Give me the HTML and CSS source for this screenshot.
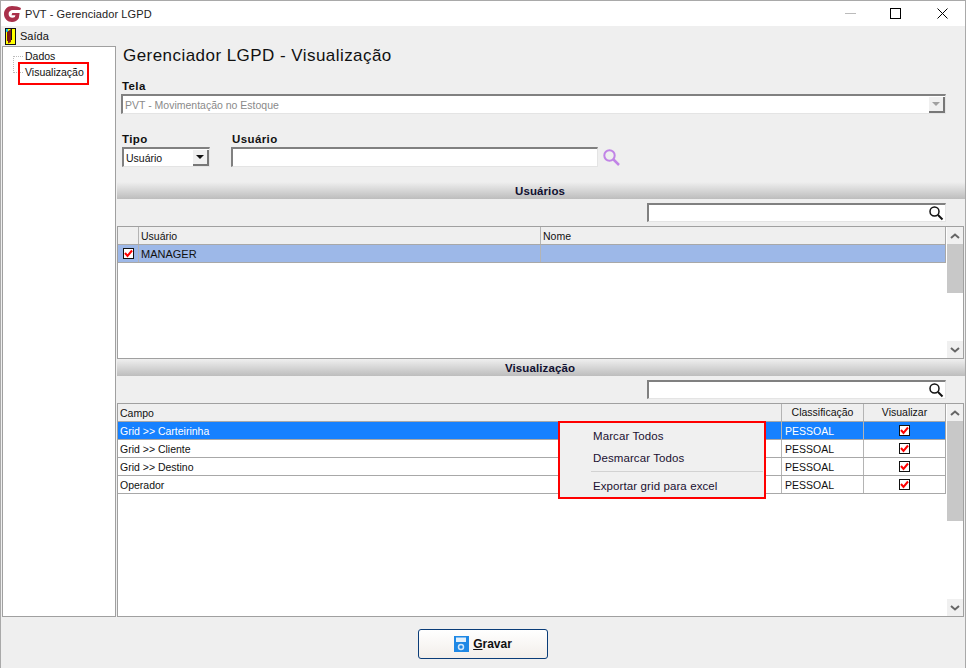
FILE: index.html
```html
<!DOCTYPE html>
<html lang="pt-BR">
<head>
<meta charset="utf-8">
<title>PVT - Gerenciador LGPD</title>
<link rel="stylesheet" href="styles.css">
</head>
<body>
<div class="window">
  <header class="titlebar">
    <svg class="logo" width="17" height="16" viewBox="0 0 17 16"><path d="M8 0C3.500 0 0 3.400 0 8s3.500 8 8 8c3 0 5.500-1.400 6.800-3.800L15.600 7H8.300L7.500 9.300h3.900l-.5 1.700c-.7.500-1.600.7-2.500.7-2.200 0-3.800-1.500-3.800-3.700s1.800-3.900 4-3.900h7.800L17 2C15 .700 11.500 0 8 0z" fill="#a9304a"/></svg>
    <span class="title-text">PVT - Gerenciador LGPD</span>
    <div class="win-controls">
      <svg width="11" height="11" viewBox="0 0 11 11"><path d="M0 5.500h11" stroke="#bbb" fill="none"/></svg>
      <svg width="11" height="11" viewBox="0 0 11 11"><rect x=".5" y=".5" width="10" height="10" fill="none" stroke="#000"/></svg>
      <svg class="win-close" width="11" height="11" viewBox="0 0 11 11"><path d="M.5.500l10 10M10.500.500l-10 10" fill="none" stroke="#000"/></svg>
    </div>
  </header>
  <nav class="menubar">
    <svg width="11" height="17" viewBox="0 0 11 17"><rect width="11" height="17" fill="#111"/><rect x="1" y="1" width="9" height="15" fill="#ff0"/><rect x="1" y="1" width="2" height="3" fill="#18c8e8"/><path d="M2 4l4-3v13l-4 2z" fill="#7a1a1a"/><rect x="1" y="13" width="2" height="3" fill="#ff0"/><rect x="6" y="1" width="1" height="11" fill="#111"/></svg>
    <span>Saída</span>
  </nav>
  <div class="content">
    <aside class="tree">
      <div class="tree-line"></div>
      <div class="node">Dados</div>
      <div class="node node-marked">Visualização</div>
    </aside>
    <main class="main">
      <div class="form">
        <h1 class="heading">Gerenciador LGPD - Visualização</h1>
        <label class="label">Tela</label>
        <div class="field field-tela">
          <span class="value muted">PVT - Movimentação no Estoque</span>
          <span class="drop drop-off"><i></i></span>
        </div>
        <div class="filters">
          <div class="col-tipo">
            <label class="label">Tipo</label>
            <div class="field field-tipo"><span class="value">Usuário</span><span class="drop"><i></i></span></div>
          </div>
          <div class="col-user">
            <label class="label">Usuário</label>
            <div class="user-row">
              <div class="field field-user"></div>
              <svg width="17" height="17" viewBox="0 0 17 17"><circle cx="6.500" cy="6.500" r="5.200" fill="none" stroke="#c184e6" stroke-width="2"/><path d="M10.500 10.500l5.500 5.500" stroke="#c184e6" stroke-width="2.500"/></svg>
            </div>
          </div>
        </div>
      </div>

      <div class="band">Usuários</div>
      <div class="searchbar">
        <div class="field field-search">
          <svg width="16" height="16" viewBox="0 0 16 16"><circle cx="6.500" cy="6.500" r="4.500" fill="none" stroke="#111" stroke-width="1.500"/><path d="M10 10l4.500 4.500" stroke="#111" stroke-width="2"/></svg>
        </div>
      </div>
      <section class="grid grid-users">
        <div class="grid-body">
          <div class="row head cols-users">
            <div class="cell"></div><div class="cell">Usuário</div><div class="cell">Nome</div>
          </div>
          <div class="row sel-light cols-users">
            <div class="cell cell-center"><span class="check"><svg width="9" height="9" viewBox="0 0 9 9"><path d="M1 4l2.500 3L8 1.500" fill="none" stroke="#f00" stroke-width="2"/></svg></span></div>
            <div class="cell cell-manager">MANAGER</div><div class="cell"></div>
          </div>
        </div>
        <div class="scroll">
          <span class="arrow"><svg width="10" height="6" viewBox="0 0 10 6"><path d="M1 5l4-3.500L9 5" fill="none" stroke="#666" stroke-width="2"/></svg></span>
          <div class="thumb thumb-users"></div>
          <span class="arrow"><svg width="10" height="6" viewBox="0 0 10 6"><path d="M1 1l4 3.500L9 1" fill="none" stroke="#666" stroke-width="2"/></svg></span>
        </div>
      </section>

      <div class="band">Visualização</div>
      <div class="searchbar">
        <div class="field field-search">
          <svg width="16" height="16" viewBox="0 0 16 16"><circle cx="6.500" cy="6.500" r="4.500" fill="none" stroke="#111" stroke-width="1.500"/><path d="M10 10l4.500 4.500" stroke="#111" stroke-width="2"/></svg>
        </div>
      </div>
      <section class="grid grid-fields">
        <div class="grid-body">
          <div class="row head cols-fields">
            <div class="cell">Campo</div><div class="cell cell-center">Classificação</div><div class="cell cell-center">Visualizar</div>
          </div>
          <div class="row sel cols-fields">
            <div class="cell">Grid &gt;&gt; Carteirinha</div><div class="cell cell-cls">PESSOAL</div>
            <div class="cell cell-center"><span class="check"><svg width="9" height="9" viewBox="0 0 9 9"><path d="M1 4l2.500 3L8 1.500" fill="none" stroke="#f00" stroke-width="2"/></svg></span></div>
          </div>
          <div class="row cols-fields">
            <div class="cell">Grid &gt;&gt; Cliente</div><div class="cell cell-cls">PESSOAL</div>
            <div class="cell cell-center"><span class="check"><svg width="9" height="9" viewBox="0 0 9 9"><path d="M1 4l2.500 3L8 1.500" fill="none" stroke="#f00" stroke-width="2"/></svg></span></div>
          </div>
          <div class="row cols-fields">
            <div class="cell">Grid &gt;&gt; Destino</div><div class="cell cell-cls">PESSOAL</div>
            <div class="cell cell-center"><span class="check"><svg width="9" height="9" viewBox="0 0 9 9"><path d="M1 4l2.500 3L8 1.500" fill="none" stroke="#f00" stroke-width="2"/></svg></span></div>
          </div>
          <div class="row cols-fields">
            <div class="cell">Operador</div><div class="cell cell-cls">PESSOAL</div>
            <div class="cell cell-center"><span class="check"><svg width="9" height="9" viewBox="0 0 9 9"><path d="M1 4l2.500 3L8 1.500" fill="none" stroke="#f00" stroke-width="2"/></svg></span></div>
          </div>
        </div>
        <div class="scroll">
          <span class="arrow"><svg width="10" height="6" viewBox="0 0 10 6"><path d="M1 5l4-3.500L9 5" fill="none" stroke="#666" stroke-width="2"/></svg></span>
          <div class="thumb thumb-fields"></div>
          <span class="arrow"><svg width="10" height="6" viewBox="0 0 10 6"><path d="M1 1l4 3.500L9 1" fill="none" stroke="#666" stroke-width="2"/></svg></span>
        </div>
        <div class="context">
          <div class="ctx-item">Marcar Todos</div>
          <div class="ctx-item">Desmarcar Todos</div>
          <div class="ctx-sep"></div>
          <div class="ctx-item">Exportar grid para excel</div>
        </div>
      </section>
    </main>
  </div>
  <footer class="footer">
    <button class="save" type="button">
      <svg width="15" height="16" viewBox="0 0 15 16"><rect width="15" height="16" fill="#1e88e5"/><rect x="2" y="1.500" width="10" height="4.500" fill="#e3f0fb"/><circle cx="7" cy="11" r="2.500" fill="none" stroke="#cfe6fa" stroke-width="1.500"/></svg>
      <span><u>G</u>ravar</span>
    </button>
  </footer>
</div>
</body>
</html>
```
FILE: styles.css
```css
*, *::after { box-sizing: border-box; }
html, body { margin: 0; padding: 0; }
body {
  width: 966px;
  height: 668px;
  overflow: hidden;
  font-family: "Liberation Sans", Arial, sans-serif;
  font-size: 10.5px;
  color: #111;
  background: #efefef;
}
.window {
  width: 966px;
  height: 668px;
  display: flex;
  flex-direction: column;
  border-top: 1px solid #a9a9a9;
  border-left: 1px solid #a9a9a9;
  border-right: 1px solid #a9a9a9;
}
.titlebar {
  height: 25px;
  flex: none;
  background: #fff;
  display: flex;
  align-items: center;
  padding-left: 3px;
  gap: 4px;
}
.title-text { font-size: 11px; color: #222; flex: 1; letter-spacing: .1px; }
.win-controls { display: flex; gap: 34px; padding-right: 17px; align-items: center; }
.win-close { margin-left: 2px; }
.menubar {
  height: 20px;
  flex: none;
  display: flex;
  align-items: center;
  gap: 4px;
  padding-left: 4px;
  font-size: 11px;
}
.content { flex: none; height: 571px; display: flex; }
.tree {
  position: relative;
  width: 114px;
  margin: 0 1px 0 1px;
  flex: none;
  background: #fff;
  border: 1px solid #a0a0a0;
  padding: 1px 0 0 21px;
}
.tree-line {
  position: absolute;
  left: 10px;
  top: 9px;
  width: 10px;
  height: 17px;
  border-left: 1px dotted #bbb;
  border-top: 1px dotted #bbb;
  border-bottom: 1px dotted #bbb;
}
.node { height: 16px; line-height: 16px; padding-left: 1px; white-space: nowrap; }
.node-marked { position: relative; }
.node-marked::after {
  content: "";
  position: absolute;
  left: -6px;
  top: -2px;
  width: 71px;
  height: 23px;
  border: 2px solid #f00;
}
.main { flex: 1; min-width: 0; display: flex; flex-direction: column; }
.form { height: 136px; flex: none; padding: 0 0 0 4px; }
.heading {
  margin: 0;
  font-size: 17px;
  font-weight: 400;
  letter-spacing: .45px;
  color: #111;
  line-height: 20px;
  padding: 0 0 0 2px;
  height: 33px;
}
.label {
  display: block;
  font-size: 11.5px;
  font-weight: 700;
  line-height: 14px;
  height: 15px;
  padding-left: 1px;
  letter-spacing: .4px;
}
.field {
  background: #fff;
  border-top: 2px solid #808080;
  border-left: 2px solid #808080;
  border-right: 1px solid #e4e4e4;
  border-bottom: 1px solid #e4e4e4;
  display: flex;
  align-items: center;
}
.value { flex: 1; padding: 1px 0 0 2px; white-space: nowrap; overflow: hidden; }
.muted { color: #8a8a8a; }
.field-tela { width: 825px; height: 20px; }
.drop {
  width: 16px;
  height: 16px;
  background: #f0f0f0;
  border-right: 2px solid #777;
  border-bottom: 2px solid #777;
  display: flex;
  align-items: center;
  justify-content: center;
  flex: none;
}
.drop i {
  width: 0;
  height: 0;
  border-left: 4px solid transparent;
  border-right: 4px solid transparent;
  border-top: 4px solid #111;
}
.drop-off i { border-top-color: #a0a0a0; }
.filters { display: flex; margin-top: 18px; }
.col-tipo { width: 110px; flex: none; }
.col-user { flex: 1; }
.user-row { display: flex; align-items: center; gap: 5px; }
.user-row svg { margin-top: 1px; }
.field-tipo { width: 88px; height: 20px; margin-left: 1px; }
.field-user { width: 367px; height: 20px; }
.band {
  height: 17px;
  flex: none;
  background: linear-gradient(#efefef, #bdbdbd);
  text-align: center;
  font-size: 11.5px;
  font-weight: 700;
  color: #101030;
  line-height: 18px;
  letter-spacing: .1px;
  padding-right: 2px;
}
.searchbar {
  height: 27px;
  flex: none;
  padding: 4px 0 0 530px;
}
.field-search {
  width: 299px;
  height: 19px;
  justify-content: flex-end;
  padding-right: 1px;
}
.grid {
  position: relative;
  flex: none;
  display: flex;
  background: #fff;
  border: 1px solid #a0a0a0;
  margin-right: 1px;
}
.grid-users { height: 133px; }
.grid-fields { height: 214px; }
.grid-body { flex: 1; min-width: 0; }
.row {
  display: grid;
  height: 18px;
  line-height: 19px;
  border-bottom: 1px solid #a8a8a8;
}
.cols-users { grid-template-columns: 21px 402px 1fr; }
.cols-fields { grid-template-columns: 664px 82px 1fr; }
.cell {
  padding-left: 2px;
  border-right: 1px solid #b4b4b4;
  white-space: nowrap;
  overflow: hidden;
}
.cell:last-child { border-right: 1px solid #a8a8a8; }
.cell-cls { padding-left: 3px; }
.cell-manager { font-size: 11px; }
.cell-center {
  padding-left: 0;
  display: flex;
  align-items: center;
  justify-content: center;
}
.head { background: #efefef; }
.sel-light { background: #9db8e8; }
.sel { background: #1681ff; color: #fff; }
.check {
  width: 11px;
  height: 11px;
  border: 1px solid #111;
  background: #fff;
  display: flex;
  align-items: center;
  justify-content: center;
}
.scroll {
  width: 17px;
  flex: none;
  display: flex;
  flex-direction: column;
  background: #fff;
  padding-left: 1px;
}
.arrow {
  height: 17px;
  flex: none;
  display: flex;
  align-items: center;
  justify-content: center;
  background: #f0f0f0;
}
.thumb { background: #c8c8c8; }
.thumb-users { height: 49px; flex: none; }
.thumb-fields { height: 100px; flex: none; }
.thumb + .arrow { margin-top: auto; }
.context {
  position: absolute;
  left: 440px;
  top: 17px;
  width: 208px;
  height: 78px;
  background: #f0f0f0;
  border: 2px solid #f00;
  padding: 2px 0 0 33px;
  color: #201030;
  font-size: 11.5px;
}
.ctx-item { height: 22px; line-height: 22px; white-space: nowrap; letter-spacing: .1px; }
.ctx-sep { height: 1px; background: #d2d2d2; margin: 2px 1px 3px -2px; }
.footer {
  flex: 1;
  display: flex;
  justify-content: center;
  align-items: flex-start;
  padding-top: 12px;
}
.save {
  width: 130px;
  height: 30px;
  border: 1px solid #0a3c78;
  border-radius: 3px;
  background: linear-gradient(#fff, #f2eeea);
  display: flex;
  align-items: center;
  justify-content: center;
  gap: 4px;
  font: 700 12px "Liberation Sans", Arial, sans-serif;
  color: #111;
  padding: 0;
}
```
